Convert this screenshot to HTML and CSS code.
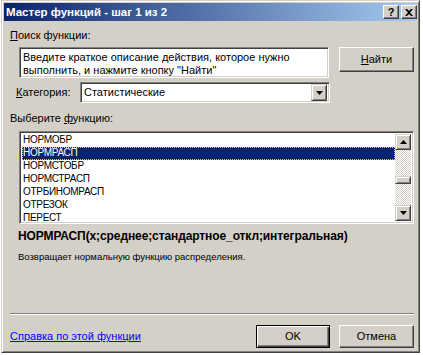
FILE: index.html
```html
<!DOCTYPE html>
<html lang="ru">
<head>
<meta charset="utf-8">
<title>Мастер функций</title>
<link rel="stylesheet" href="styles.css">
</head>
<body>
<div class="win">
  <div class="titlebar">
    <span class="title">Мастер функций - шаг 1 из 2</span>
    <div class="tbtns">
      <span class="tbtn help">?</span>
      <span class="tbtn close"><svg width="8" height="7" viewBox="0 0 8 7"><path d="M0 0h2l2 2 2-2h2L5 3.5 8 7H6L4 5 2 7H0l3-3.5z" fill="#000"/></svg></span>
    </div>
  </div>
  <div class="client">
    <div class="lbl"><u>П</u>оиск функции:</div>
    <div class="search-row">
      <div class="field search">Введите краткое описание действия, которое нужно выполнить, и нажмите кнопку "Найти"</div>
      <button class="btn find"><u>Н</u>айти</button>
    </div>
    <div class="cat-row">
      <span class="cat-lbl"><u>К</u>атегория:</span>
      <div class="field select">
        <span class="sel-text">Статистические</span>
        <span class="ddbtn"><svg width="7" height="4" viewBox="0 0 7 4"><path d="M0 0h7L3.5 4z" fill="#000"/></svg></span>
      </div>
    </div>
    <div class="lbl lbl-fn">Выберите <u>ф</u>ункцию:</div>
    <div class="field list">
      <div class="items">
        <div class="item">НОРМОБР</div>
        <div class="item sel">НОРМРАСП</div>
        <div class="item">НОРМСТОБР</div>
        <div class="item">НОРМСТРАСП</div>
        <div class="item">ОТРБИНОМРАСП</div>
        <div class="item">ОТРЕЗОК</div>
        <div class="item">ПЕРЕСТ</div>
      </div>
      <div class="vscroll">
        <span class="sbtn"><svg width="7" height="4" viewBox="0 0 7 4"><path d="M3.5 0L7 4H0z" fill="#000"/></svg></span>
        <div class="track">
          <span class="thumb"></span>
        </div>
        <span class="sbtn"><svg width="7" height="4" viewBox="0 0 7 4"><path d="M0 0h7L3.5 4z" fill="#000"/></svg></span>
      </div>
    </div>
    <div class="sig">НОРМРАСП(x;среднее;стандартное_откл;интегральная)</div>
    <div class="desc">Возвращает нормальную функцию распределения.</div>
    <div class="sep"></div>
    <div class="footer">
      <a class="help-link" href="#">Справка по этой функции</a>
      <button class="btn ok">OK</button>
      <button class="btn cancel">Отмена</button>
    </div>
  </div>
</div>
</body>
</html>
```
FILE: styles.css
```css
html, body {
  margin: 0;
  padding: 0;
}
body {
  width: 423px;
  height: 355px;
  background: #ffffff;
  font-family: "Liberation Sans", Arial, sans-serif;
  font-size: 11px;
  line-height: 13px;
  color: #000;
  overflow: hidden;
}
.win {
  box-sizing: border-box;
  margin-left: 1px;
  width: 419px;
  height: 353px;
  background: #d4d0c8;
  border: 1px solid;
  border-color: #d4d0c8 #404040 #404040 #d4d0c8;
  box-shadow: inset 1px 1px #ffffff, inset -1px -1px #808080;
  padding: 2px;
  display: flex;
  flex-direction: column;
}
.titlebar {
  flex: none;
  height: 18px;
  background: linear-gradient(to right, #0a246a, #a6caf0);
  display: flex;
  align-items: center;
  justify-content: space-between;
  padding-left: 2px;
}
.title {
  color: #fff;
  font-weight: bold;
  font-size: 11.5px;
  white-space: nowrap;
}
.tbtns {
  display: flex;
  gap: 2px;
}
.tbtn {
  box-sizing: border-box;
  width: 16px;
  height: 14px;
  background: #d4d0c8;
  border: 1px solid;
  border-color: #fff #404040 #404040 #fff;
  box-shadow: inset -1px -1px #808080;
  display: flex;
  align-items: center;
  justify-content: center;
  font-weight: bold;
  font-size: 11px;
  line-height: 12px;
}
.client {
  flex: 1;
  padding: 8px 3px 0 6px;
  display: flex;
  flex-direction: column;
}
.client > * {
  flex: none;
}
.field {
  box-sizing: border-box;
  background: #fff;
  border: 1px solid;
  border-color: #808080 #fff #fff #808080;
  box-shadow: inset 1px 1px #404040, inset -1px -1px #d4d0c8;
}
.search-row {
  margin-top: 5px;
  display: flex;
  align-items: flex-start;
  justify-content: space-between;
  padding-left: 9px;
}
.search {
  width: 310px;
  height: 31px;
  padding: 3px 3px 0 3px;
}
.btn {
  box-sizing: border-box;
  font: inherit;
  color: #000;
  background: #d4d0c8;
  border: 1px solid;
  border-color: #fff #404040 #404040 #fff;
  box-shadow: inset -1px -1px #808080;
  padding: 0;
  margin: 0;
  width: 75px;
  height: 25px;
}
.cat-row {
  margin-top: 4px;
  display: flex;
  align-items: center;
  padding-left: 6px;
}
.cat-lbl {
  width: 64px;
}
.select {
  width: 250px;
  height: 21px;
  display: flex;
  align-items: center;
  justify-content: space-between;
  padding: 2px 2px 2px 3px;
}
.ddbtn {
  box-sizing: border-box;
  width: 16px;
  height: 17px;
  background: #d4d0c8;
  border: 1px solid;
  border-color: #d4d0c8 #404040 #404040 #d4d0c8;
  box-shadow: inset 1px 1px #fff, inset -1px -1px #808080;
  display: flex;
  align-items: center;
  justify-content: center;
}
.lbl-fn {
  margin-top: 9px;
}
.list {
  margin-top: 6px;
  margin-left: 9px;
  height: 93px;
  display: flex;
  padding: 2px;
  overflow: hidden;
}
.items {
  flex: 1;
}
.item {
  height: 13px;
  line-height: 12px;
  padding-left: 1px;
  font-size: 10px;
  letter-spacing: -0.3px;
  white-space: nowrap;
}
.item.sel {
  background: #0a246a;
  color: #fff;
  outline: 1px dotted #f0c860;
  outline-offset: -1px;
}
.vscroll {
  width: 16px;
  display: flex;
  flex-direction: column;
}
.sbtn {
  box-sizing: border-box;
  width: 16px;
  height: 16px;
  flex: none;
  background: #d4d0c8;
  border: 1px solid;
  border-color: #d4d0c8 #404040 #404040 #d4d0c8;
  box-shadow: inset 1px 1px #fff, inset -1px -1px #808080;
  display: flex;
  align-items: center;
  justify-content: center;
}
.track {
  flex: 1;
  background: repeating-conic-gradient(#d4d0c8 0 25%, #fff 0 50%) 0 0 / 2px 2px;
  padding-top: 26px;
}
.thumb {
  display: block;
  box-sizing: border-box;
  height: 8px;
  background: #d4d0c8;
  border: 1px solid;
  border-color: #d4d0c8 #404040 #404040 #d4d0c8;
  box-shadow: inset 1px 1px #fff, inset -1px -1px #808080;
}
.sig {
  margin-top: 6px;
  padding-left: 8px;
  font-weight: bold;
  font-size: 12px;
  letter-spacing: -0.1px;
  white-space: nowrap;
}
.desc {
  margin-top: 7px;
  padding-left: 8px;
  font-size: 9.5px;
  white-space: nowrap;
}
.sep {
  margin-top: 50px;
  height: 0;
  border-top: 1px solid #808080;
  border-bottom: 1px solid #fff;
}
.footer {
  margin-top: 10px;
  display: flex;
  align-items: center;
}
.help-link {
  color: #0000ff;
  text-decoration: underline;
  margin-right: auto;
}
.ok {
  width: 74px;
  height: 23px;
  border: 1px solid #000;
  box-shadow: inset 1px 1px #fff, inset -1px -1px #404040, inset -2px -2px #808080;
}
.cancel {
  width: 75px;
  height: 23px;
  margin-left: 9px;
}
```
